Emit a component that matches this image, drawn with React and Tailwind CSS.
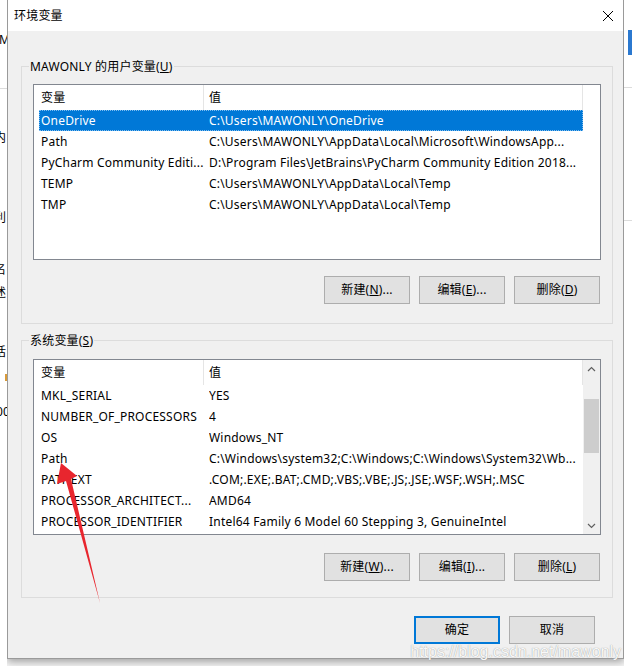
import React from 'react';

const userVars = [
    ['OneDrive', 'C:\\Users\\MAWONLY\\OneDrive'],
    ['Path', 'C:\\Users\\MAWONLY\\AppData\\Local\\Microsoft\\WindowsApp...'],
    ['PyCharm Community Editi...', 'D:\\Program Files\\JetBrains\\PyCharm Community Edition 2018...'],
    ['TEMP', 'C:\\Users\\MAWONLY\\AppData\\Local\\Temp'],
    ['TMP', 'C:\\Users\\MAWONLY\\AppData\\Local\\Temp'],
];

const sysVars = [
    ['MKL_SERIAL', 'YES'],
    ['NUMBER_OF_PROCESSORS', '4'],
    ['OS', 'Windows_NT'],
    ['Path', 'C:\\Windows\\system32;C:\\Windows;C:\\Windows\\System32\\Wb...'],
    ['PATHEXT', '.COM;.EXE;.BAT;.CMD;.VBS;.VBE;.JS;.JSE;.WSF;.WSH;.MSC'],
    ['PROCESSOR_ARCHITECT...', 'AMD64'],
    ['PROCESSOR_IDENTIFIER', 'Intel64 Family 6 Model 60 Stepping 3, GenuineIntel'],
];

function Btn({ children, primary }) {
    return (
        <button
            className={
                primary
                    ? 'w-[86px] h-[28px] bg-[#e1e1e1] border-2 border-[#0078d7] text-[12px] text-black'
                    : 'w-[86px] h-[28px] bg-[#e1e1e1] border border-[#adadad] text-[12px] text-black'
            }
        >
            {children}
        </button>
    );
}

function Chevron({ up }) {
    return (
        <svg width="9" height="6" viewBox="0 0 9 6">
            <path d={up ? 'M1 5 L4.5 1.5 L8 5' : 'M1 1 L4.5 4.5 L8 1'} fill="none" stroke="#606060" strokeWidth="1.2" />
        </svg>
    );
}

function VarList({ rows, selected, scroll }) {
    return (
        <div className="w-[568px] h-[176px] border border-[#828790] bg-white flex overflow-hidden">
            <div className="flex-1 flex flex-col">
                <div className="h-[25px] flex items-center border-r border-[#e5e5e5] shrink-0">
                    <div className="w-[170px] h-full flex items-center pl-[7px] border-r border-[#e5e5e5]">变量</div>
                    <div className="flex-1 pl-[5px]">值</div>
                </div>
                <div className="pl-[5px]">
                    {rows.map(([name, value], i) => (
                        <div
                            key={name + i}
                            className={
                                i === selected
                                    ? 'flex h-[21px] items-center bg-[#0078d7] text-white outline outline-1 outline-dotted outline-[#7fbdf0] -outline-offset-1'
                                    : 'flex h-[21px] items-center'
                            }
                        >
                            <div className="w-[170px] pl-[2px] whitespace-nowrap overflow-hidden">{name}</div>
                            <div className="flex-1 whitespace-nowrap overflow-hidden">{value}</div>
                        </div>
                    ))}
                </div>
            </div>
            <div className={scroll ? 'w-[17px] bg-[#f0f0f0] flex flex-col items-center' : 'w-[17px]'}>
                {scroll && (
                    <>
                        <div className="h-[17px] flex items-center justify-center"><Chevron up /></div>
                        <div className="mt-[22px] w-[15px] h-[54px] bg-[#cdcdcd]" />
                        <div className="flex-1" />
                        <div className="h-[17px] flex items-center justify-center"><Chevron /></div>
                    </>
                )}
            </div>
        </div>
    );
}

function Group({ label, children, className }) {
    return (
        <div className={'relative w-[592px] border border-[#dcdcdc] ' + className}>
            <span className="absolute left-[7px] -top-[9px] bg-[#f0f0f0] px-px leading-[17px]">{label}</span>
            {children}
        </div>
    );
}

export default function App() {
    return (
        <div className="relative w-[632px] h-[666px] overflow-hidden bg-[#f7f7f7] flex text-[12px] tracking-[0.2px] text-black font-['Noto_Sans','Noto_Sans_CJK_SC',sans-serif]">
            {/* background window, left */}
            <div className="relative w-[7px] h-full overflow-hidden bg-white">
                <span className="absolute left-[-1px] top-[31px]">M</span>
                <div className="absolute top-[88px] w-full border-t border-[#dcdcdc]" />
                <span className="absolute left-[-6px] top-[129px]">内</span>
                <span className="absolute left-[-6px] top-[209px]">利</span>
                <span className="absolute left-[-6px] top-[261px]">名</span>
                <span className="absolute left-[-6px] top-[284px]">述</span>
                <span className="absolute left-[-6px] top-[343px]">话</span>
                <span className="absolute left-[5px] top-[374px] w-[2px] h-[7px] bg-[#d89a3a]" />
                <span className="absolute left-[-4px] top-[403px]">00</span>
            </div>

            {/* dialog */}
            <div className="w-[617px] h-[659px] shrink-0 border border-t-0 border-[#9a9a9a] bg-[#f0f0f0] flex flex-col shadow-[0_3px_8px_rgba(0,0,0,0.35)]">
                <div className="h-[31px] bg-white flex items-center justify-between pl-[6px] pr-[9px] shrink-0">
                    <span>环境变量</span>
                    <svg width="12" height="12" viewBox="0 0 12 12">
                        <path d="M1 1 L11 11 M11 1 L1 11" stroke="#000" strokeWidth="1" />
                    </svg>
                </div>

                <div className="pl-[13px] pt-[35px]">
                    <Group label={<>MAWONLY 的用户变量(<u>U</u>)</>} className="pt-[17px] pb-[19px]">
                        <div className="pl-[11px]">
                            <VarList rows={userVars} selected={0} />
                        </div>
                        <div className="flex justify-end gap-[9px] pr-[12px] mt-[16px]">
                            <Btn>新建(<u>N</u>)...</Btn>
                            <Btn>编辑(<u>E</u>)...</Btn>
                            <Btn>删除(<u>D</u>)</Btn>
                        </div>
                    </Group>

                    <Group label={<>系统变量(<u>S</u>)</>} className="mt-[16px] pt-[18px] pb-[16px]">
                        <div className="pl-[11px]">
                            <VarList rows={sysVars} scroll />
                        </div>
                        <div className="flex justify-end gap-[9px] pr-[12px] mt-[18px]">
                            <Btn>新建(<u>W</u>)...</Btn>
                            <Btn>编辑(<u>I</u>)...</Btn>
                            <Btn>删除(<u>L</u>)</Btn>
                        </div>
                    </Group>
                </div>

                <div className="flex justify-end gap-[9px] pr-[28px] mt-[18px]">
                    <Btn primary>确定</Btn>
                    <Btn>取消</Btn>
                </div>
                <div className="flex justify-end pr-[2px] mt-[-2px]">
                    <span className="text-[16px] leading-[20px] tracking-normal font-['Liberation_Sans',sans-serif] text-[#f8f8f8] [text-shadow:0_0_1px_#8a8a8a]">
                        https://blog.csdn.net/mawonly
                    </span>
                </div>
            </div>

            {/* background window, right */}
            <div className="relative flex-1 h-full bg-white">
                <div className="absolute right-0 top-[30px] w-[4px] h-[25px] bg-[#2b79d0]" />
                <div className="absolute top-[87px] w-full border-t border-[#dcdcdc]" />
                <div className="absolute top-[220px] w-full border-t border-[#dcdcdc]" />
            </div>

            {/* red annotation arrow */}
            <svg className="absolute left-0 top-0 pointer-events-none" width="632" height="666">
                <polygon points="61,463 77,476 71,479 100,603 66,481 57,484" fill="#e8262e" />
            </svg>
        </div>
    );
}
